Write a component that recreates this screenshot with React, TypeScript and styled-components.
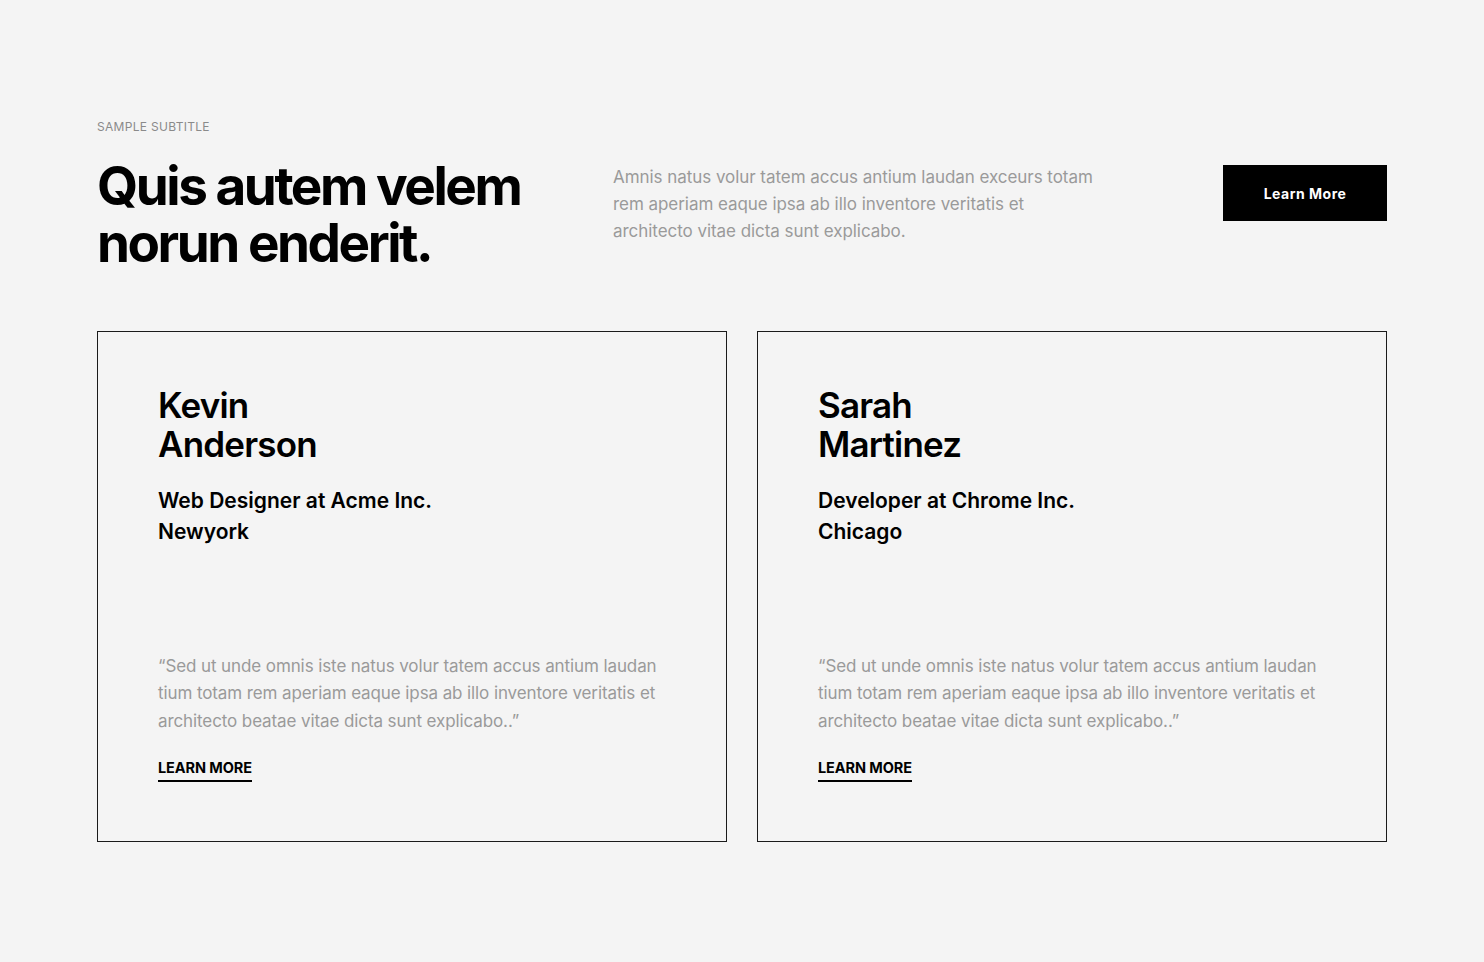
import React from "react";
import styled, { createGlobalStyle } from "styled-components";

const Global = createGlobalStyle`
  html, body { margin: 0; padding: 0; background: #f4f4f4; }
  body { font-family: Inter, "Noto Sans", sans-serif; color: #000; }
  * { box-sizing: border-box; }
`;

const Page = styled.div`
  width: 1290px;
  margin: 0 auto;
  padding: 118px 0 120px;
`;

const Subtitle = styled.div`
  font-size: 12px;
  line-height: 18px;
  color: #8a8a8a;
  letter-spacing: 0.3px;
  text-transform: uppercase;
  margin-bottom: 22px;
`;

const HeaderRow = styled.div`
  display: flex;
  align-items: flex-start;
`;

const Heading = styled.h1`
  margin: 0;
  width: 516px;
  font-size: 53px;
  line-height: 57px;
  font-weight: 700;
  letter-spacing: -2.45px;
`;

const Lead = styled.p`
  margin: 6px 0 0;
  width: 490px;
  font-size: 17px;
  line-height: 27px;
  color: #9a9a9a;
  letter-spacing: -0.05px;
`;

const PrimaryButton = styled.button`
  margin: 7px 0 0 auto;
  width: 164px;
  height: 56px;
  border: none;
  background: #000;
  color: #fff;
  font-family: inherit;
  font-size: 14px;
  font-weight: 700;
  letter-spacing: 0.5px;
  cursor: pointer;
`;

const Cards = styled.div`
  display: grid;
  grid-template-columns: 1fr 1fr;
  gap: 30px;
  margin-top: 59px;
`;

const Card = styled.div`
  height: 511px;
  border: 1px solid #1a1a1a;
  padding: 54px 60px 59px;
  display: flex;
  flex-direction: column;
  justify-content: space-between;
`;

const Name = styled.h3`
  margin: 0;
  font-size: 35px;
  line-height: 39px;
  font-weight: 600;
  letter-spacing: -0.8px;
`;

const Role = styled.div`
  margin-top: 21px;
  font-size: 21px;
  line-height: 31px;
  font-weight: 600;
  letter-spacing: 0px;
`;

const Quote = styled.p`
  margin: 0;
  font-size: 17px;
  line-height: 27.5px;
  color: #9a9a9a;
  letter-spacing: -0.1px;
`;

const TextLink = styled.a`
  display: inline-block;
  margin-top: 24px;
  font-size: 14.5px;
  line-height: 18px;
  font-weight: 700;
  color: #000;
  text-decoration: none;
  text-transform: uppercase;
  letter-spacing: -0.1px;
  padding-bottom: 3px;
  border-bottom: 2px solid #000;
`;

const people = [
  {
    first: "Kevin",
    last: "Anderson",
    role: "Web Designer at Acme Inc.",
    city: "Newyork",
  },
  {
    first: "Sarah",
    last: "Martinez",
    role: "Developer at Chrome Inc.",
    city: "Chicago",
  },
];

export default function App() {
  return (
    <>
      <Global />
      <Page>
        <Subtitle>Sample Subtitle</Subtitle>
        <HeaderRow>
          <Heading>
            Quis autem velem
            <br />
            norun enderit.
          </Heading>
          <Lead>
            Amnis natus volur tatem accus antium laudan exceurs totam rem
            aperiam eaque ipsa ab illo inventore veritatis et architecto vitae
            dicta sunt explicabo.
          </Lead>
          <PrimaryButton>Learn More</PrimaryButton>
        </HeaderRow>
        <Cards>
          {people.map((p) => (
            <Card key={p.first}>
              <div>
                <Name>
                  {p.first}
                  <br />
                  {p.last}
                </Name>
                <Role>
                  {p.role}
                  <br />
                  {p.city}
                </Role>
              </div>
              <div>
                <Quote>
                  “Sed ut unde omnis iste natus volur tatem accus antium laudan
                  tium totam rem aperiam eaque ipsa ab illo inventore veritatis
                  et architecto beatae vitae dicta sunt explicabo..”
                </Quote>
                <TextLink href="#">Learn More</TextLink>
              </div>
            </Card>
          ))}
        </Cards>
      </Page>
    </>
  );
}
